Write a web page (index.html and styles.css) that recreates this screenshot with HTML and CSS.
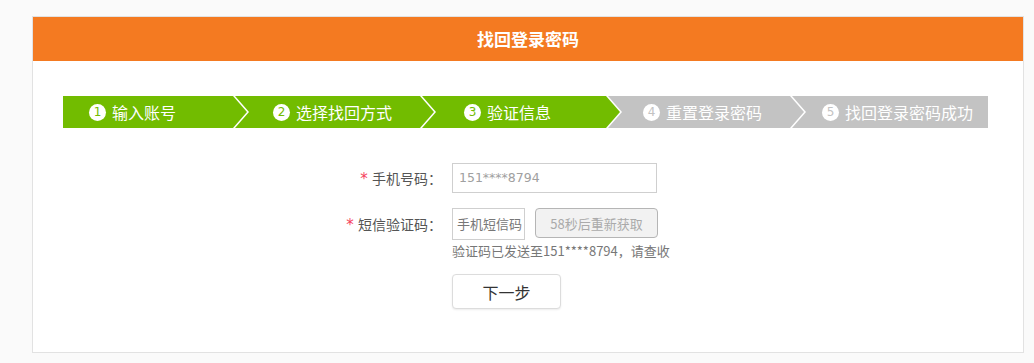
FILE: index.html
```html
<!DOCTYPE html>
<html lang="zh-CN">
<head>
<meta charset="utf-8">
<title>找回登录密码</title>
<link rel="stylesheet" href="styles.css">
</head>
<body>
<div class="card">
  <div class="card-head">找回登录密码</div>
  <div class="steps">
    <div class="step step-first done s1"><span class="num">1</span>输入账号</div>
    <div class="step done s2"><span class="num">2</span>选择找回方式</div>
    <div class="step done s3"><span class="num">3</span>验证信息</div>
    <div class="step todo s4"><span class="num">4</span>重置登录密码</div>
    <div class="step step-last todo s5"><span class="num">5</span>找回登录密码成功</div>
  </div>
  <div class="form">
    <div class="row row-phone">
      <label class="label"><span class="req">*</span> 手机号码：</label>
      <div class="input input-phone">151****8794</div>
    </div>
    <div class="row row-code">
      <label class="label"><span class="req">*</span> 短信验证码：</label>
      <div class="input input-code">手机短信码</div>
      <button class="resend" type="button">58秒后重新获取</button>
    </div>
    <div class="hint">验证码已发送至151****8794，请查收</div>
    <button class="next" type="button">下一步</button>
  </div>
</div>
</body>
</html>
```
FILE: styles.css
```css
html, body {
  margin: 0;
  padding: 0;
}
body {
  background: #fafafa;
  font-family: "Noto Sans CJK SC", "Microsoft YaHei", sans-serif;
  color: #333;
  width: 1034px;
  height: 363px;
  overflow: hidden;
}
.card {
  margin: 16px 0 0 32px;
  width: 990px;
  height: 335px;
  background: #fff;
  border: 1px solid #e2e2e2;
}
.card-head {
  height: 44px;
  line-height: 44px;
  background: #f47a21;
  color: #fff;
  font-size: 17px;
  font-weight: bold;
  text-align: center;
}
.steps {
  display: flex;
  width: 925px;
  height: 32px;
  margin: 35px 0 0 30px;
}
.step {
  height: 32px;
  display: flex;
  align-items: center;
  color: #fff;
  font-size: 16px;
  flex: 0 0 auto;
  margin-left: -12px;
  clip-path: polygon(0 0, calc(100% - 14px) 0, 100% 50%, calc(100% - 14px) 100%, 0 100%, 14px 50%);
  white-space: nowrap;
}
.step.done { background: #72bc00; }
.step.todo { background: #c3c3c3; }
.step-first {
  margin-left: 0;
  clip-path: polygon(0 0, calc(100% - 14px) 0, 100% 50%, calc(100% - 14px) 100%, 0 100%);
}
.step-last {
  flex: 1 1 auto;
  clip-path: polygon(0 0, 100% 0, 100% 100%, 0 100%, 14px 50%);
}
.s1 { width: 184px; padding-left: 26px; }
.s2 { width: 199px; padding-left: 38px; }
.s3 { width: 198px; padding-left: 42px; }
.s4 { width: 196px; padding-left: 35px; }
.s5 { padding-left: 30px; }
.step, .step * { box-sizing: border-box; }
.num {
  width: 17px;
  height: 17px;
  border-radius: 50%;
  background: #fff;
  font-family: "DejaVu Sans", sans-serif;
  font-size: 12px;
  line-height: 17px;
  text-align: center;
  margin-right: 6px;
  flex: 0 0 auto;
}
.done .num { color: #72bc00; }
.todo .num { color: #c3c3c3; }

.form {
  margin: 35px 0 0 0;
  padding-left: 289px;
  font-size: 14px;
}
.row {
  display: flex;
  align-items: flex-start;
}
.row-code { margin-top: 14px; }
.label {
  width: 120px;
  margin-right: 10px;
  text-align: right;
  color: #555;
  line-height: 30px;
  font-size: 14px;
}
.row-code .label { line-height: 32px; }
.req {
  color: #f5425d;
  font-family: "DejaVu Sans", sans-serif;
  font-size: 15px;
  margin-right: 1px;
}
.input {
  box-sizing: border-box;
  border: 1px solid #cfcfcf;
  background: #fff;
  font-size: 13px;
  color: #999;
  padding-left: 6px;
}
.input-phone {
  width: 205px;
  height: 30px;
  line-height: 28px;
  font-family: "DejaVu Sans", sans-serif;
  font-size: 12.5px;
  color: #a0a0a0;
}
.input-code {
  width: 73px;
  height: 32px;
  line-height: 30px;
  padding-left: 4px;
  color: #777;
}
.resend {
  box-sizing: border-box;
  width: 123px;
  height: 30px;
  margin-left: 10px;
  border: 1px solid #b5b5b5;
  border-radius: 4px;
  background: #f2f2f2;
  color: #aaa;
  font-family: inherit;
  font-size: 13px;
  padding: 0;
}
.hint {
  margin: 1px 0 0 130px;
  font-size: 13px;
  color: #777;
  line-height: 18px;
}
.next {
  display: block;
  box-sizing: border-box;
  margin: 14px 0 0 130px;
  width: 109px;
  height: 35px;
  background: #fff;
  border: 1px solid #dcdcdc;
  border-radius: 4px;
  box-shadow: 0 1px 2px rgba(0, 0, 0, 0.08);
  font-family: inherit;
  font-size: 16px;
  color: #333;
  padding: 0;
}
```
